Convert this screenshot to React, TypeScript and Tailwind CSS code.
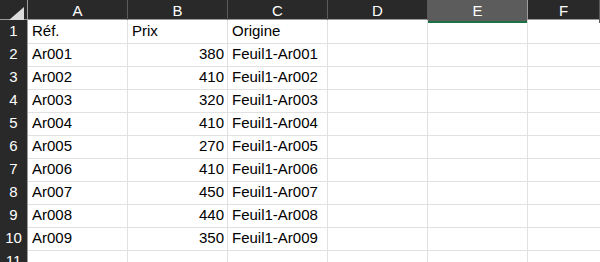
import React from 'react';

const cols = ['A', 'B', 'C', 'D', 'E', 'F'];

const rows: [string, string, string][] = [
  ['Réf.', 'Prix', 'Origine'],
  ['Ar001', '380', 'Feuil1-Ar001'],
  ['Ar002', '410', 'Feuil1-Ar002'],
  ['Ar003', '320', 'Feuil1-Ar003'],
  ['Ar004', '410', 'Feuil1-Ar004'],
  ['Ar005', '270', 'Feuil1-Ar005'],
  ['Ar006', '410', 'Feuil1-Ar006'],
  ['Ar007', '450', 'Feuil1-Ar007'],
  ['Ar008', '440', 'Feuil1-Ar008'],
  ['Ar009', '350', 'Feuil1-Ar009'],
  ['', '', ''],
];

const gridCols = 'grid grid-cols-[28px_100px_100px_100px_100px_100px_1fr]';

export default function App() {
  return (
    <div
      className="w-[600px] h-[262px] overflow-hidden bg-white text-[15px] text-black"
      style={{ fontFamily: '"Liberation Sans", Arial, sans-serif' }}
    >
      {/* column headers */}
      <div className={`${gridCols} h-[20px] bg-[#292929] border-b border-[#9b9b9b]`}>
        <div className="flex items-end justify-end border-r border-[#9b9b9b] pb-[3px] pr-[3px]">
          <svg width="15" height="13" viewBox="0 0 15 13">
            <polygon points="15,0 15,13 0,13" fill="#dcdcdc" />
          </svg>
        </div>
        {cols.map((c) => (
          <div
            key={c}
            className={
              c === 'E'
                ? 'flex items-center justify-center border-r border-[#9b9b9b] bg-[#5c5c5c] text-white shadow-[inset_0_-2px_0_#1e7145]'
                : 'flex items-center justify-center border-r border-[#5a5a5a] text-white'
            }
          >
            {c}
          </div>
        ))}
      </div>

      {rows.map((r, i) => (
        <div key={i} className={`${gridCols} h-[23px]`}>
          <div className="flex items-center justify-center bg-[#292929] text-white border-r border-b border-[#9b9b9b]">
            {i + 1}
          </div>
          <div className="flex items-center pl-[4px] border-r border-b border-[#e1e1e1]">{r[0]}</div>
          <div
            className={
              i === 0
                ? 'flex items-center pl-[4px] border-r border-b border-[#e1e1e1]'
                : 'flex items-center justify-end pr-[3px] border-r border-b border-[#e1e1e1]'
            }
          >
            {r[1]}
          </div>
          <div className="flex items-center pl-[4px] border-r border-b border-[#e1e1e1]">{r[2]}</div>
          <div className="border-r border-b border-[#e1e1e1]" />
          <div className="border-r border-b border-[#e1e1e1]" />
          <div className="border-b border-[#e1e1e1]" />
        </div>
      ))}
    </div>
  );
}
